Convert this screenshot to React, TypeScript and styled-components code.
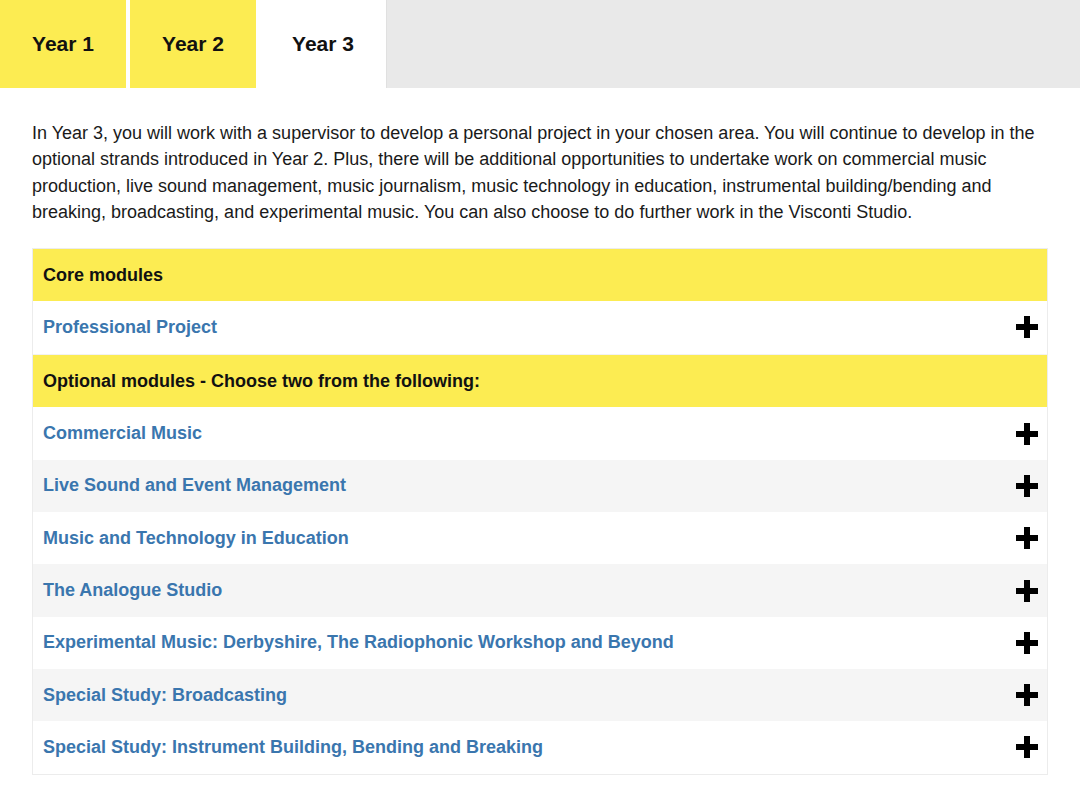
import styled, { createGlobalStyle } from "styled-components";

const GlobalStyle = createGlobalStyle`
  body {
    margin: 0;
    background: #fff;
    font-family: "Liberation Sans", Arial, sans-serif;
    color: #111;
  }
`;

const palette = {
  yellow: "#fcec52",
  gray: "#e9e9e9",
  stripe: "#f5f5f5",
  border: "#ececec",
  link: "#3a76ae",
};

const Tabs = styled.div`
  display: flex;
  height: 88px;
  gap: 4px;
  background: #fff;
`;

const Tab = styled.div<{ $active?: boolean }>`
  width: 126px;
  display: flex;
  align-items: center;
  justify-content: center;
  font-size: 21px;
  font-weight: 700;
  color: #111;
  background: ${(p) => (p.$active ? "#fff" : palette.yellow)};
`;

const TabFill = styled.div`
  flex: 1;
  background: ${palette.gray};
  margin-left: -4px;
  border-left: 1px solid #e0e0e0;
`;

const Content = styled.div`
  padding: 32px 32px 0;
`;

const Intro = styled.p`
  margin: 0 0 23px;
  font-size: 18px;
  line-height: 26.3px;
  color: #1a1a1a;
`;

const Table = styled.div`
  width: 1016px;
  border: 1px solid ${palette.border};
  box-sizing: border-box;
`;

const Row = styled.div<{ $striped?: boolean }>`
  height: 52.3px;
  box-sizing: border-box;
  display: flex;
  align-items: center;
  justify-content: space-between;
  padding: 0 9px 0 10px;
  background: ${(p) => (p.$striped ? palette.stripe : "#fff")};
  font-size: 18px;
  font-weight: 700;
  color: ${palette.link};
`;

const Heading = styled.div`
  height: 52px;
  display: flex;
  align-items: center;
  padding: 0 10px;
  background: ${palette.yellow};
  font-size: 18px;
  font-weight: 700;
  color: #111;

  ${Row} + & {
    margin-top: 1px;
    border-top: 1px solid #f2f2f2;
  }
`;

const Plus = () => (
  <svg width="22" height="22" viewBox="0 0 22 22">
    <rect x="8" y="0" width="6" height="22" fill="#000" />
    <rect x="0" y="8" width="22" height="6" fill="#000" />
  </svg>
);

const optional = [
  "Commercial Music",
  "Live Sound and Event Management",
  "Music and Technology in Education",
  "The Analogue Studio",
  "Experimental Music: Derbyshire, The Radiophonic Workshop and Beyond",
  "Special Study: Broadcasting",
  "Special Study: Instrument Building, Bending and Breaking",
];

export default function App() {
  return (
    <>
      <GlobalStyle />
      <Tabs>
        <Tab>Year 1</Tab>
        <Tab>Year 2</Tab>
        <Tab $active>Year 3</Tab>
        <TabFill />
      </Tabs>
      <Content>
        <Intro>
          In Year 3, you will work with a supervisor to develop a personal project in your
          chosen area. You will continue to develop in the optional strands introduced in
          Year 2. Plus, there will be additional opportunities to undertake work on
          commercial music production, live sound management, music journalism, music
          technology in education, instrumental building/bending and breaking,
          broadcasting, and experimental music. You can also choose to do further work in
          the Visconti Studio.
        </Intro>
        <Table>
          <Heading>Core modules</Heading>
          <Row>
            Professional Project
            <Plus />
          </Row>
          <Heading>Optional modules - Choose two from the following:</Heading>
          {optional.map((name, i) => (
            <Row key={name} $striped={i % 2 === 1}>
              {name}
              <Plus />
            </Row>
          ))}
        </Table>
      </Content>
    </>
  );
}
